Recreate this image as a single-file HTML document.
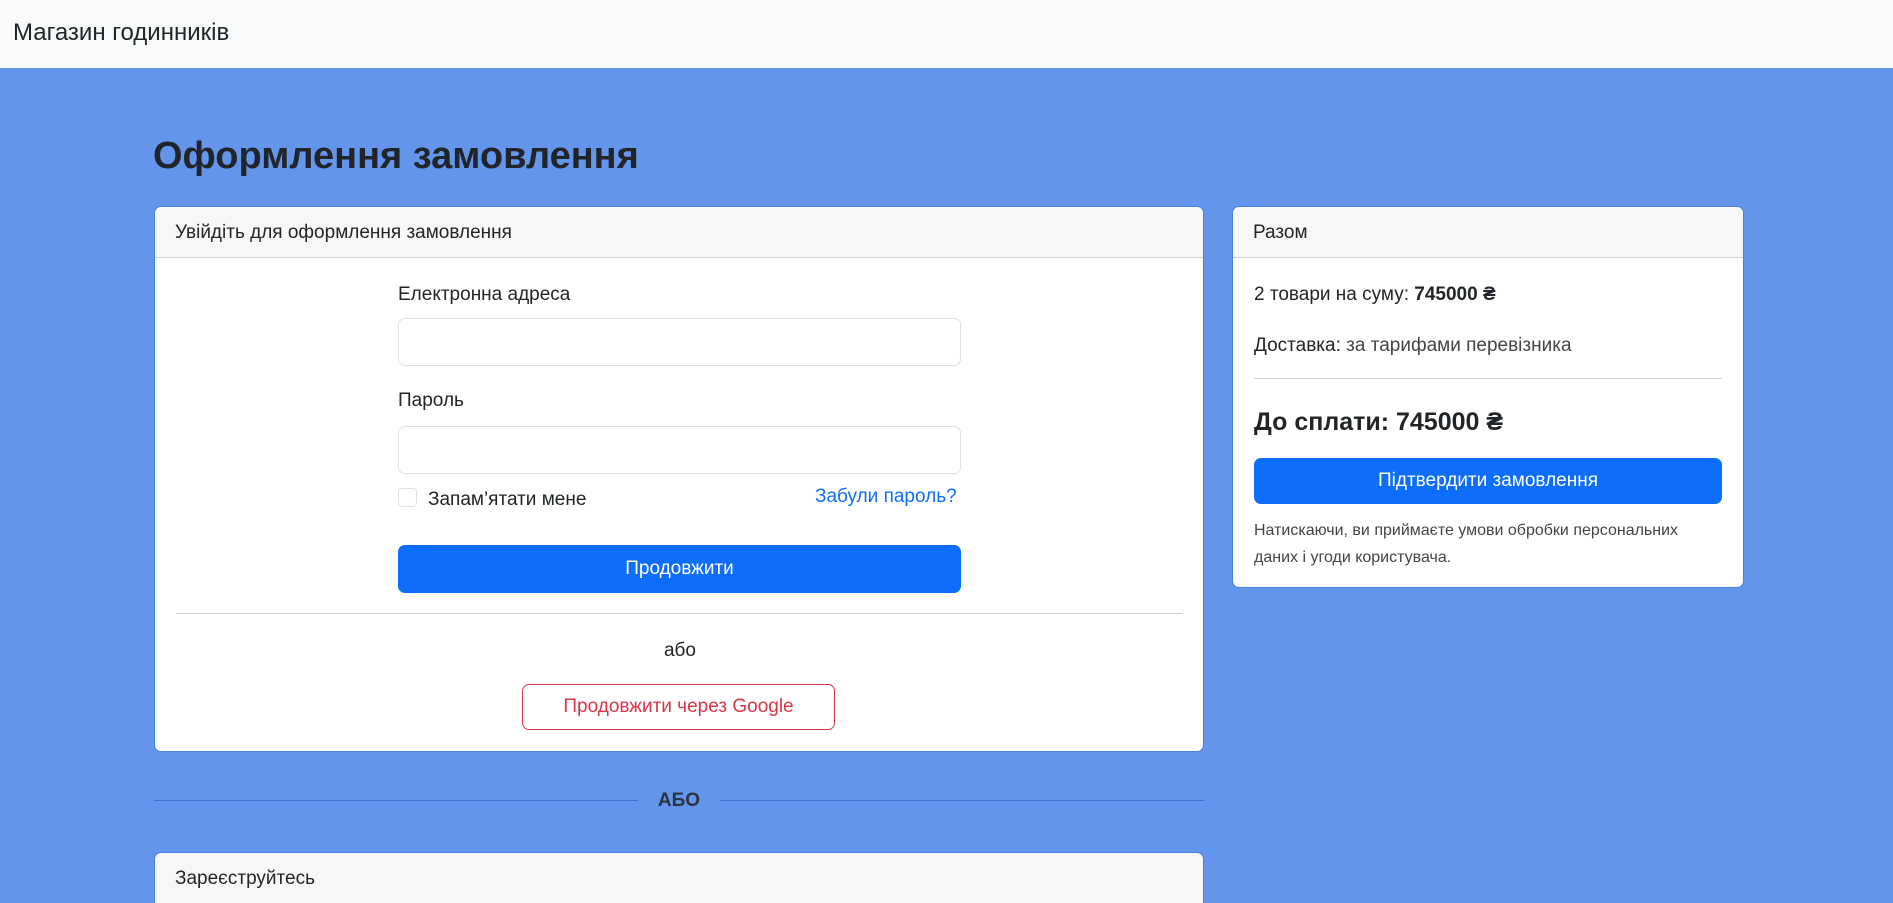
<!DOCTYPE html>
<html style="overflow:hidden;height:903px"><head><meta charset="utf-8"><style>
*{box-sizing:border-box;margin:0;padding:0}
body{width:1893px;height:903px;overflow:hidden;background:#6495ed;font-family:"Liberation Sans",sans-serif;color:#212529;font-size:19px;position:relative}
.nav{position:absolute;left:0;top:0;width:1893px;height:68px;background:#f8f9fa;}
.nav span{position:absolute;left:13px;top:19px;font-size:24px}
.abs{position:absolute}
.card{position:absolute;background:#fff;border:1px solid #4a7fe0;border-radius:7px;overflow:hidden}
.ch{background:#f7f7f7;border-bottom:1px solid rgba(0,0,0,.15);height:51px;padding:15px 20px 0;font-size:19px}
.inp{position:absolute;border:1px solid #dee2e6;border-radius:7px;background:#fff}
.btn{position:absolute;background:#0d6efd;color:#fff;border-radius:7px;text-align:center;font-size:19px}
</style></head><body>
<div class="nav"><span>Магазин годинників</span></div>
<div class="abs" style="left:153px;top:135px;font-size:38px;font-weight:700">Оформлення замовлення</div>

<div class="card" style="left:154px;top:206px;width:1050px;height:546px">
<div class="ch">Увійдіть для оформлення замовлення</div>
<div class="abs" style="left:243px;top:77px">Електронна адреса</div>
<div class="inp" style="left:243px;top:111px;width:563px;height:48px"></div>
<div class="abs" style="left:243px;top:183px">Пароль</div>
<div class="inp" style="left:243px;top:219px;width:563px;height:48px"></div>
<div class="inp" style="left:243px;top:281px;width:19px;height:19px;border-radius:4px"></div>
<div class="abs" style="left:273px;top:282px">Запам’ятати мене</div>
<div class="abs" style="left:660px;top:279px;color:#0d6efd">Забули пароль?</div>
<div class="btn" style="left:243px;top:338px;width:563px;height:48px;line-height:48px">Продовжити</div>
<div class="abs" style="left:21px;top:406px;width:1007px;border-top:1px solid #ccc"></div>
<div class="abs" style="left:0;width:1050px;text-align:center;top:433px">або</div>
<div class="abs" style="left:367px;top:477px;width:313px;height:46px;border:1px solid #dc3545;border-radius:7px;color:#dc3545;text-align:center;line-height:44px">Продовжити через Google</div>
</div>

<div class="abs" style="left:154px;top:800px;width:484px;border-top:1px solid #3f6fd0"></div>
<div class="abs" style="left:720px;top:800px;width:484px;border-top:1px solid #3f6fd0"></div>
<div class="abs" style="left:638px;top:790px;width:82px;text-align:center;font-weight:bold;color:#2b3340">АБО</div>

<div class="card" style="left:154px;top:852px;width:1050px;height:51px;border-bottom:none;border-radius:7px 7px 0 0">
<div class="ch" style="border-bottom:none">Зареєструйтесь</div></div>

<div class="card" style="left:1232px;top:206px;width:512px;height:382px">
<div class="ch">Разом</div>
<div class="abs" style="left:21px;top:77px">2 товари на суму: <b>745000 ₴</b></div>
<div class="abs" style="left:21px;top:128px">Доставка: <span style="color:#444">за тарифами перевізника</span></div>
<div class="abs" style="left:21px;top:171px;width:468px;border-top:1px solid #ccc"></div>
<div class="abs" style="left:21px;top:201px;font-size:25px;font-weight:bold">До сплати: 745000 ₴</div>
<div class="btn" style="left:21px;top:251px;width:468px;height:46px;line-height:46px">Підтвердити замовлення</div>
<div class="abs" style="left:21px;top:310px;width:470px;font-size:16px;line-height:27px;color:#444">Натискаючи, ви приймаєте умови обробки персональних даних і угоди користувача.</div>
</div>
</body></html>
